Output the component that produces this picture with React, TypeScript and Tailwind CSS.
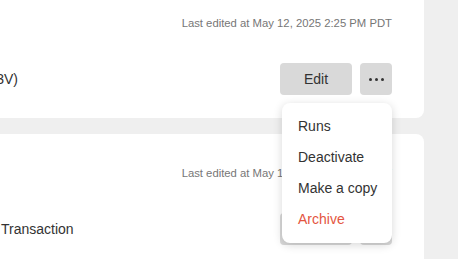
import React from "react";

function Dots() {
  return (
    <div className="flex items-center gap-[3px]">
      <span className="block h-[3px] w-[3px] rounded-full bg-[#333333]" />
      <span className="block h-[3px] w-[3px] rounded-full bg-[#333333]" />
      <span className="block h-[3px] w-[3px] rounded-full bg-[#333333]" />
    </div>
  );
}

function Card({
  name,
  stamp,
  menu,
  rounded,
}: {
  name: React.ReactNode;
  stamp: string;
  menu?: boolean;
  rounded: string;
}) {
  return (
    <div className={`w-[424px] bg-white ${rounded} h-[134px] pt-[32px] pr-[32px]`}>
      <div className="flex justify-end">
        <span className="whitespace-nowrap text-[11.3px] leading-[14px] text-[#767676]">{stamp}</span>
      </div>
      <div className="mt-[33px] flex items-center justify-between">
        {name}
        <div className="flex items-center gap-2">
          <button className="h-8 w-[72px] rounded-[4px] bg-[#d9d9d9] text-[14px] text-[#333333]">
            Edit
          </button>
          <div className="relative">
            <button className="flex h-8 w-8 items-center justify-center rounded-[4px] bg-[#d9d9d9]">
              <Dots />
            </button>
            {menu && (
              <div className="absolute right-0 top-full z-10 mt-2 w-[110px] rounded-lg bg-white py-2 shadow-[0_2px_10px_rgba(0,0,0,0.16)]">
                {["Runs", "Deactivate", "Make a copy"].map((t) => (
                  <div
                    key={t}
                    className="flex h-[31px] items-center whitespace-nowrap px-4 text-[14px] text-[#333333]"
                  >
                    {t}
                  </div>
                ))}
                <div className="flex h-[31px] items-center whitespace-nowrap px-4 text-[14px] text-[#e4553f]">
                  Archive
                </div>
              </div>
            )}
          </div>
        </div>
      </div>
    </div>
  );
}

export default function App() {
  return (
    <div
      className="h-[259px] w-[458px] overflow-hidden bg-[#efefef]"
      style={{ fontFamily: '"Liberation Sans", Arial, sans-serif' }}
    >
      <div className="mt-[-16px] flex flex-col gap-4">
        <Card
          rounded="rounded-r-lg"
          stamp="Last edited at May 12, 2025 2:25 PM PDT"
          menu
          name={
            <div className="flex w-[18px] justify-end overflow-hidden whitespace-nowrap text-[14px] text-[#333333]">
              Transfer Rule (ID 7A3V)
            </div>
          }
        />
        <Card
          rounded="rounded-r-lg"
          stamp="Last edited at May 12, 2025 1:48 PM PDT"
          name={
            <div className="whitespace-nowrap pl-[1px] text-[14px] text-[#333333]">Transaction</div>
          }
        />
      </div>
    </div>
  );
}
